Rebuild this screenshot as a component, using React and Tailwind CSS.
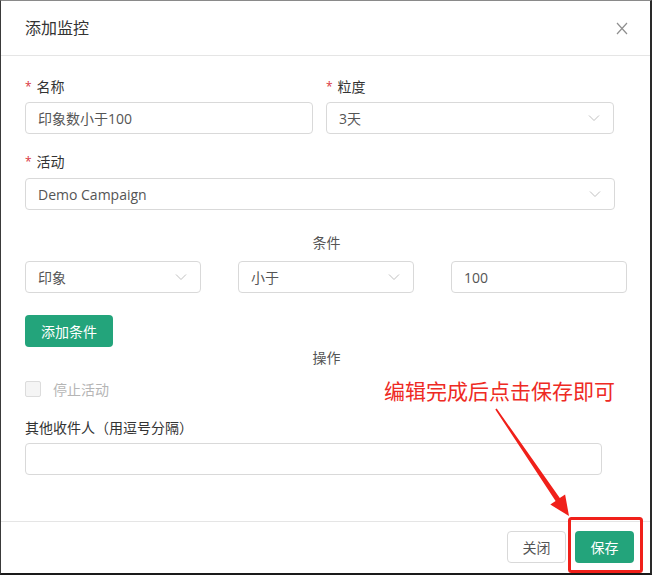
import React from "react";

const font = { fontFamily: "'Open Sans', 'Noto Sans CJK SC', sans-serif" };

const Chevron = () => (
  <svg width="12" height="8" viewBox="0 0 12 8" className="shrink-0">
    <path d="M1 1.5 L6 6.5 L11 1.5" fill="none" stroke="#c0c0c0" strokeWidth="1" />
  </svg>
);

const Label = ({ children, required }) => (
  <div className="h-5 flex items-center text-[14px] text-[#333] leading-5">
    {required && <span className="text-[#d9343c] mr-[5px] text-[12px]">*</span>}
    {children}
  </div>
);

const Select = ({ value, className }) => (
  <div
    className={`h-8 border border-[#d9d9d9] rounded-[4px] flex items-center justify-between pl-3 pr-[13px] text-[14px] text-[#555] ${className}`}
  >
    <span>{value}</span>
    <Chevron />
  </div>
);

const Input = ({ value, className }) => (
  <div
    className={`h-8 border border-[#d9d9d9] rounded-[4px] flex items-center pl-3 text-[14px] text-[#555] ${className}`}
  >
    {value}
  </div>
);

export default function App() {
  return (
    <div
      style={font}
      className="relative w-[652px] h-[575px] bg-white border-l border-t border-r-2 border-b-2 border-l-[#3a3a3a] border-t-[#8a8a8a] border-r-[#2a2a2a] border-b-[#1a1a1a] flex flex-col overflow-hidden"
    >
      {/* Header */}
      <div className="h-[55px] shrink-0 border-b border-[#e5e5e5] flex items-center justify-between pl-6 pr-[22px]">
        <div className="text-[16px] text-[#333]">添加监控</div>
        <svg width="12" height="13" viewBox="0 0 12 13">
          <path d="M1 1 L11 12 M11 1 L1 12" stroke="#8f8f8f" strokeWidth="1.2" fill="none" />
        </svg>
      </div>

      {/* Body */}
      <div className="flex-1 pl-6 pt-[21px]">
        <div className="flex">
          <div className="w-[288px]">
            <Label required>名称</Label>
            <Input value="印象数小于100" className="mt-[5px] w-[288px]" />
          </div>
          <div className="ml-[13px] w-[288px]">
            <Label required>粒度</Label>
            <Select value="3天" className="mt-[5px] w-[288px]" />
          </div>
        </div>

        <div className="mt-[18px]">
          <Label required>活动</Label>
          <Select value="Demo Campaign" className="mt-[6px] w-[590px]" />
        </div>

        <div className="mt-[23px] w-[603px] text-center text-[14px] text-[#555] leading-5">条件</div>
        <div className="mt-[8px] flex">
          <Select value="印象" className="w-[176px]" />
          <Select value="小于" className="ml-[37px] w-[176px]" />
          <Input value="100" className="ml-[37px] w-[176px]" />
        </div>

        <button className="mt-[22px] h-8 w-[88px] rounded-[4px] bg-[#23a47b] text-white text-[14px]">
          添加条件
        </button>

        <div className="mt-[1px] w-[603px] text-center text-[14px] text-[#555] leading-5">操作</div>

        <div className="mt-[13px] h-4 flex items-center">
          <div className="w-4 h-4 rounded-[2px] border border-[#dcdcdc] bg-[#f5f5f5]" />
          <span className="ml-3 text-[14px] text-[#b5b5b5]">停止活动</span>
        </div>

        <div className="mt-[21px]">
          <Label>其他收件人（用逗号分隔）</Label>
          <Input value="" className="mt-[5px] w-[577px]" />
        </div>
      </div>

      {/* Footer */}
      <div className="h-[52px] shrink-0 border-t border-[#e5e5e5] flex items-start justify-end pt-[9px] pr-4 gap-[9px]">
        <button className="h-8 w-[59px] rounded-[4px] border border-[#d9d9d9] bg-white text-[14px] text-[#555]">
          关闭
        </button>
        <button className="h-8 w-[59px] rounded-[4px] bg-[#23a47b] text-white text-[14px]">
          保存
        </button>
      </div>

      {/* Annotation overlay */}
      <div className="absolute left-[383px] top-[376px] text-[21px] leading-7 text-[#ee2a24] whitespace-nowrap">
        编辑完成后点击保存即可
      </div>
      <svg className="absolute left-0 top-0 pointer-events-none" width="652" height="575">
        <polygon
          points="495.7,407.5 558.8,497.1 564.1,493.4 568,515 549.3,503.6 554.6,499.9 494.3,408.5"
          fill="#f0201a"
        />
        <rect x="568.5" y="517.5" width="72" height="53" rx="2" fill="none" stroke="#f0201a" strokeWidth="3" />
      </svg>
    </div>
  );
}
